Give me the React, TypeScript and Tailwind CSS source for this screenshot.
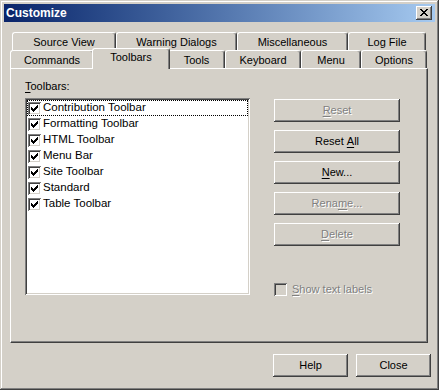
import React from 'react';

const raised =
    'shadow-[inset_-1px_-1px_#404040,inset_1px_1px_#ffffff,inset_-2px_-2px_#808080,inset_2px_2px_#d4d0c8]';
const sunken =
    'shadow-[inset_1px_1px_#808080,inset_-1px_-1px_#ffffff,inset_2px_2px_#404040,inset_-2px_-2px_#d4d0c8]';
const disabledText = 'text-[#808080] [text-shadow:1px_1px_0_#ffffff]';

const toolbars = [
    'Contribution Toolbar',
    'Formatting Toolbar',
    'HTML Toolbar',
    'Menu Bar',
    'Site Toolbar',
    'Standard',
    'Table Toolbar',
];

function CheckMark() {
    return (
        <svg width="13" height="13" viewBox="0 0 13 13" shapeRendering="crispEdges" className="block">
            <path
                fill="#000"
                d="M3 5h1v3h-1z M4 6h1v3h-1z M5 7h1v3h-1z M6 6h1v3h-1z M7 5h1v3h-1z M8 4h1v3h-1z M9 3h1v3h-1z"
            />
        </svg>
    );
}

function CheckBox({checked, disabled}: {checked?: boolean; disabled?: boolean}) {
    return (
        <div className={`w-[13px] h-[13px] shrink-0 ${sunken} ${disabled ? 'bg-[#d4d0c8]' : 'bg-white'}`}>
            {checked && <CheckMark/>}
        </div>
    );
}

function Tab({label, w, selected}: {label: string; w: string; selected?: boolean}) {
    return (
        <div
            className={`
                flex items-center justify-center bg-[#d4d0c8] rounded-t-[3px]
                border-t border-l border-r border-t-white border-l-white border-r-[#404040]
                shadow-[inset_-1px_0_#808080]
                ${w}
                ${selected ? 'relative z-10 -mt-[2px] h-[21px] -mx-[2px] pb-[3px]' : 'h-[18px] pt-[1px]'}
            `}
        >
            {label}
        </div>
    );
}

function Button({children, disabled, className = ''}: {children: React.ReactNode; disabled?: boolean; className?: string}) {
    return (
        <div
            className={`h-[23px] flex items-center justify-center bg-[#d4d0c8] ${raised} ${disabled ? disabledText : 'text-black'} ${className}`}
        >
            {children}
        </div>
    );
}

export default function App() {
    return (
        <div
            className="w-[439px] h-[390px] bg-[#d4d0c8] p-[4px] flex flex-col text-[11px] leading-none text-black shadow-[inset_-1px_-1px_#404040,inset_1px_1px_#d4d0c8,inset_-2px_-2px_#808080,inset_2px_2px_#ffffff]"
            style={{fontFamily: '"Liberation Sans", Arial, sans-serif'}}
        >
            {/* title bar */}
            <div className="h-[18px] flex items-center justify-between bg-linear-to-r from-[#0a246a] to-[#a6caf0] pl-[2px] pr-[3px]">
                <span className="text-white font-bold text-[12px]">Customize</span>
                <div className={`w-[16px] h-[14px] bg-[#d4d0c8] ${raised} flex items-center justify-center`}>
                    <svg width="8" height="7" viewBox="0 0 8 7" shapeRendering="crispEdges" className="block -mt-[1px]">
                        <path
                            fill="#000"
                            d="M0 0h2v1h-2z M6 0h2v1h-2z M1 1h2v1h-2z M5 1h2v1h-2z M2 2h4v1h-4z M3 3h2v1h-2z M2 4h4v1h-4z M1 5h2v1h-2z M5 5h2v1h-2z M0 6h2v1h-2z M6 6h2v1h-2z"
                        />
                    </svg>
                </div>
            </div>

            {/* tab rows */}
            <div className="mt-[10px] flex pl-[8px]">
                <Tab label="Source View" w="w-[104px]"/>
                <Tab label="Warning Dialogs" w="w-[121px]"/>
                <Tab label="Miscellaneous" w="w-[111px]"/>
                <Tab label="Log File" w="w-[78px]"/>
            </div>
            <div className="flex items-start pl-[6px] h-[18px]">
                <Tab label="Commands" w="w-[84px]"/>
                <Tab label="Toolbars" w="w-[78px]" selected/>
                <Tab label="Tools" w="w-[57px]"/>
                <Tab label="Keyboard" w="w-[76px]"/>
                <Tab label="Menu" w="w-[60px]"/>
                <Tab label="Options" w="w-[66px]"/>
            </div>

            {/* tab panel */}
            <div className="ml-[6px] w-[418px] h-[275px] border border-t-white border-l-white border-r-[#404040] border-b-[#404040] shadow-[inset_-1px_-1px_#808080] flex gap-[24px] pl-[14px] pt-[11px]">
                <div className="w-[225px] flex flex-col">
                    <div className="h-[18px] pt-[1px]">
                        <span className="underline underline-offset-[2px]">T</span>oolbars:
                    </div>
                    <div className={`h-[197px] bg-white ${sunken} p-[2px]`}>
                        {toolbars.map((name, i) => (
                            <div
                                key={name}
                                className={`h-[16px] flex items-center gap-[2px] pl-[1px] ${i === 0 ? 'outline-1 outline-dotted outline-black -outline-offset-1' : ''}`}
                            >
                                <CheckBox checked/>
                                <span className="text-[11.5px]">{name}</span>
                            </div>
                        ))}
                    </div>
                </div>

                <div className="w-[126px] flex flex-col gap-[8px] pt-[19px]">
                    <Button disabled><span className="underline underline-offset-[2px]">R</span>eset</Button>
                    <Button>Reset&nbsp;<span className="underline underline-offset-[2px]">A</span>ll</Button>
                    <Button><span className="underline underline-offset-[2px]">N</span>ew...</Button>
                    <Button disabled>Rena<span className="underline underline-offset-[2px]">m</span>e...</Button>
                    <Button disabled><span className="underline underline-offset-[2px]">D</span>elete</Button>
                    <div className="mt-[29px] flex items-center gap-[5px]">
                        <CheckBox disabled/>
                        <span className={disabledText}>
                            <span className="underline underline-offset-[2px]">S</span>how text labels
                        </span>
                    </div>
                </div>
            </div>

            {/* dialog buttons */}
            <div className="mt-[11px] flex justify-end gap-[8px] pr-[4px]">
                <Button className="w-[75px]">Help</Button>
                <Button className="w-[75px]">Close</Button>
            </div>
        </div>
    );
}
